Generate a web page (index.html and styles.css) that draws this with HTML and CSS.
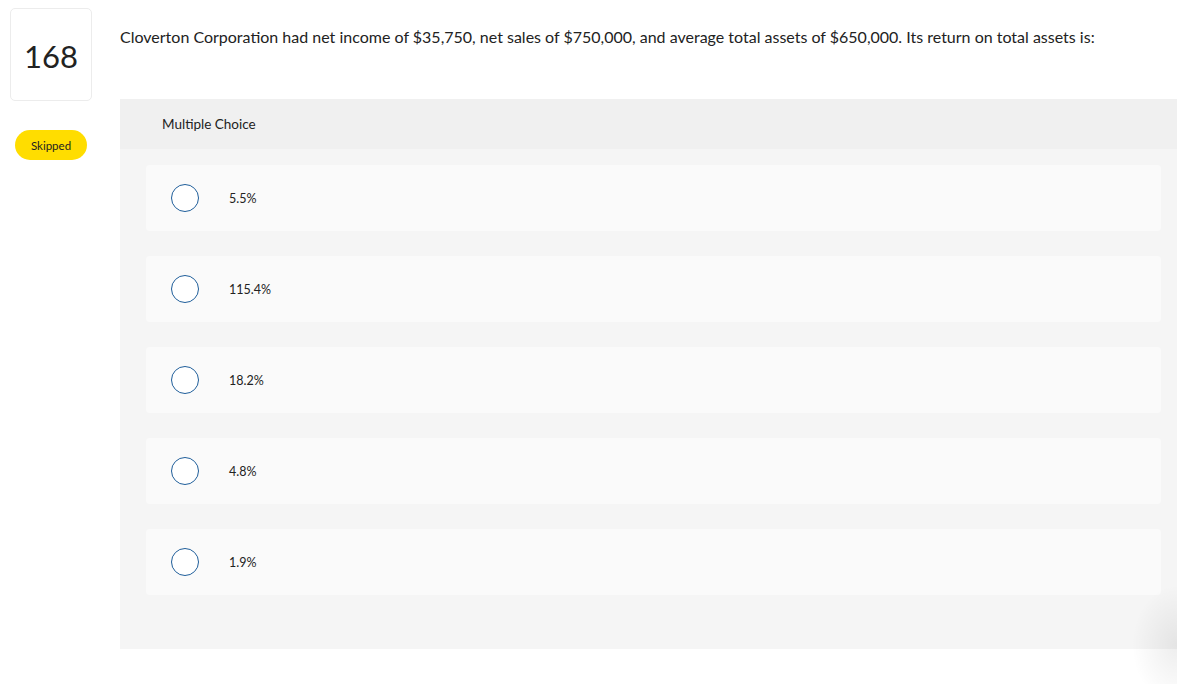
FILE: index.html
```html
<!DOCTYPE html>
<html>
<head>
<meta charset="utf-8">
<link rel="stylesheet" href="styles.css">
</head>
<body>
<div class="page">
  <aside class="side">
    <div class="num">168</div>
    <div class="badge">Skipped</div>
  </aside>
  <main class="main">
    <p class="question">Cloverton Corporation had net income of $35,750, net sales of $750,000, and average total assets of $650,000. Its return on total assets is:</p>
    <section class="panel">
      <div class="panel-head">Multiple Choice</div>
      <div class="options">
        <div class="option"><span class="radio"></span><span class="label">5.5%</span></div>
        <div class="option"><span class="radio"></span><span class="label">115.4%</span></div>
        <div class="option"><span class="radio"></span><span class="label">18.2%</span></div>
        <div class="option"><span class="radio"></span><span class="label">4.8%</span></div>
        <div class="option"><span class="radio"></span><span class="label">1.9%</span></div>
      </div>
    </section>
  </main>
</div>
<div class="edge-shadow"></div>
</body>
</html>
```
FILE: styles.css
```css
html, body {
  margin: 0;
  padding: 0;
  background: #fff;
  overflow: hidden;
}
body {
  font-family: "Lato", "Open Sans", sans-serif;
  color: #222;
  width: 1177px;
  height: 684px;
  position: relative;
}
.page {
  display: flex;
  padding-top: 8px;
}
.side {
  width: 120px;
  flex: none;
  padding-left: 10px;
  box-sizing: border-box;
}
.num {
  width: 82px;
  height: 93px;
  box-sizing: border-box;
  border: 1px solid #ececec;
  border-radius: 5px;
  display: flex;
  align-items: center;
  justify-content: center;
  font-size: 31px;
  color: #222;
  padding-top: 2px;
}
.badge {
  margin: 29px 0 0 5px;
  width: 72px;
  height: 30px;
  border-radius: 15px;
  background: #ffdd00;
  display: flex;
  align-items: center;
  justify-content: center;
  font-size: 11.5px;
  color: #222;
}
.main {
  flex: 1;
  min-width: 0;
}
.question {
  margin: 18px 0 0 0;
  font-size: 16px;
  line-height: 22px;
  color: #222;
  height: 73px;
}
.panel {
  background: #f5f5f5;
  height: 550px;
}
.panel-head {
  background: #f0f0f0;
  height: 50px;
  display: flex;
  align-items: center;
  padding-left: 42px;
  font-size: 13.5px;
  color: #222;
}
.options {
  display: flex;
  flex-direction: column;
  gap: 25px;
  padding: 16px 16px 0 26px;
}
.option {
  background: #fafafa;
  height: 66px;
  border-radius: 4px;
  display: flex;
  align-items: center;
  padding-left: 25px;
}
.radio {
  width: 28px;
  height: 28px;
  box-sizing: border-box;
  border: 1.5px solid #1f5e9a;
  border-radius: 50%;
  background: #fff;
  flex: none;
}
.label {
  margin-left: 30px;
  font-size: 12.5px;
  color: #222;
}
.edge-shadow {
  position: absolute;
  right: 0;
  bottom: 0;
  width: 45px;
  height: 130px;
  background: radial-gradient(ellipse 45px 60px at 100% 70%, rgba(0, 0, 0, 0.07), rgba(0, 0, 0, 0) 100%);
  pointer-events: none;
}
```
